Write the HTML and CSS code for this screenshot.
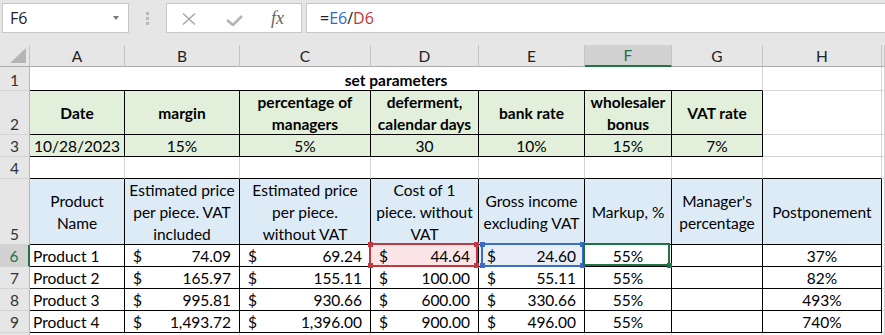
FILE: index.html
```html
<!DOCTYPE html>
<html lang="en">
<head>
    <meta charset="UTF-8">
    <meta name="viewport" content="width=device-width, initial-scale=1.0">
    <title>Parameters sheet</title>
    <link rel="stylesheet" href="styles.css">
</head>

<body>
    <div class="toolbar">
        <div class="name-box"><span>F6</span><span class="caret"></span></div>
        <div class="grip"><i></i><i></i><i></i></div>
        <div class="fx-buttons">
            <svg class="icon-x" width="14" height="12" viewBox="0 0 14 12">
                <path d="M1 0.5 L13 11.5 M13 0.5 L1 11.5" stroke="#ababab" stroke-width="1.6" fill="none"/>
            </svg>
            <svg class="icon-ok" width="17" height="11" viewBox="0 0 17 11">
                <path d="M1 5 L7 10 L16 1" stroke="#b4b4b4" stroke-width="2.6" fill="none"/>
            </svg>
            <span class="fx">fx</span>
        </div>
        <div class="formula">=<span class="ref-e">E6</span>/<span class="ref-d">D6</span></div>
    </div>

    <div class="sheet">
        <!-- column headers -->
        <div class="hd corner"><svg width="16" height="15" viewBox="0 0 16 15"><polygon points="16,0 16,15 0,15" fill="#b5b5b5"/></svg></div>
        <div class="hd">A</div>
        <div class="hd">B</div>
        <div class="hd">C</div>
        <div class="hd">D</div>
        <div class="hd">E</div>
        <div class="hd sel">F</div>
        <div class="hd">G</div>
        <div class="hd">H</div>
        <div class="hd"></div>

        <!-- row 1 -->
        <div class="rh">1</div>
        <div class="c span7 bb bold ctr"><span>set parameters</span></div>
        <div class="c"></div>
        <div class="c"></div>

        <!-- row 2 -->
        <div class="rh">2</div>
        <div class="c b green bold wrap"><span>Date</span></div>
        <div class="c b green bold wrap"><span>margin</span></div>
        <div class="c b green bold wrap"><span>percentage of<br>managers</span></div>
        <div class="c b green bold wrap"><span>deferment,<br>calendar days</span></div>
        <div class="c b green bold wrap"><span>bank rate</span></div>
        <div class="c b green bold wrap"><span>wholesaler<br>bonus</span></div>
        <div class="c b green bold wrap"><span>VAT rate</span></div>
        <div class="c"></div>
        <div class="c"></div>

        <!-- row 3 -->
        <div class="rh">3</div>
        <div class="c b green ctr"><span>10/28/2023</span></div>
        <div class="c b green ctr"><span>15%</span></div>
        <div class="c b green ctr"><span>5%</span></div>
        <div class="c b green ctr"><span>30</span></div>
        <div class="c b green ctr"><span>10%</span></div>
        <div class="c b green ctr"><span>15%</span></div>
        <div class="c b green ctr"><span>7%</span></div>
        <div class="c"></div>
        <div class="c"></div>

        <!-- row 4 -->
        <div class="rh">4</div>
        <div class="c bb"></div>
        <div class="c bb"></div>
        <div class="c bb"></div>
        <div class="c bb"></div>
        <div class="c bb"></div>
        <div class="c bb"></div>
        <div class="c bb"></div>
        <div class="c bb"></div>
        <div class="c"></div>

        <!-- row 5 -->
        <div class="rh">5</div>
        <div class="c b blue wrap"><span>Product<br>Name</span></div>
        <div class="c b blue wrap"><span>Estimated price<br>per piece. VAT<br>included</span></div>
        <div class="c b blue wrap"><span>Estimated price<br>per piece.<br>without VAT</span></div>
        <div class="c b blue wrap"><span>Cost of 1<br>piece. without<br>VAT</span></div>
        <div class="c b blue wrap"><span>Gross income<br>excluding VAT</span></div>
        <div class="c b blue wrap"><span>Markup, %</span></div>
        <div class="c b blue wrap"><span>Manager's<br>percentage</span></div>
        <div class="c b blue wrap"><span>Postponement</span></div>
        <div class="c"></div>

        <!-- row 6 -->
        <div class="rh sel">6</div>
        <div class="c b txt"><span>Product 1</span></div>
        <div class="c b acct"><span>$</span><span>74.09</span></div>
        <div class="c b acct"><span>$</span><span>69.24</span></div>
        <div class="c b acct ref red"><span>$</span><span>44.64</span><i class="frame"><b class="tl"></b><b class="tr"></b><b class="bl"></b><b class="br"></b></i></div>
        <div class="c b acct ref blu"><span>$</span><span>24.60</span><i class="frame"><b class="tl"></b><b class="tr"></b><b class="bl"></b><b class="br"></b></i></div>
        <div class="c b ctr ref active"><span>55%</span><i class="frame"><b class="br"></b></i></div>
        <div class="c b"></div>
        <div class="c b ctr"><span>37%</span></div>
        <div class="c"></div>

        <!-- row 7 -->
        <div class="rh">7</div>
        <div class="c b txt"><span>Product 2</span></div>
        <div class="c b acct"><span>$</span><span>165.97</span></div>
        <div class="c b acct"><span>$</span><span>155.11</span></div>
        <div class="c b acct"><span>$</span><span>100.00</span></div>
        <div class="c b acct"><span>$</span><span>55.11</span></div>
        <div class="c b ctr"><span>55%</span></div>
        <div class="c b"></div>
        <div class="c b ctr"><span>82%</span></div>
        <div class="c"></div>

        <!-- row 8 -->
        <div class="rh">8</div>
        <div class="c b txt"><span>Product 3</span></div>
        <div class="c b acct"><span>$</span><span>995.81</span></div>
        <div class="c b acct"><span>$</span><span>930.66</span></div>
        <div class="c b acct"><span>$</span><span>600.00</span></div>
        <div class="c b acct"><span>$</span><span>330.66</span></div>
        <div class="c b ctr"><span>55%</span></div>
        <div class="c b"></div>
        <div class="c b ctr"><span>493%</span></div>
        <div class="c"></div>

        <!-- row 9 -->
        <div class="rh">9</div>
        <div class="c b txt"><span>Product 4</span></div>
        <div class="c b acct"><span>$</span><span>1,493.72</span></div>
        <div class="c b acct"><span>$</span><span>1,396.00</span></div>
        <div class="c b acct"><span>$</span><span>900.00</span></div>
        <div class="c b acct"><span>$</span><span>496.00</span></div>
        <div class="c b ctr"><span>55%</span></div>
        <div class="c b"></div>
        <div class="c b ctr"><span>740%</span></div>
        <div class="c"></div>

        <!-- row 10, only its top edge is on screen -->
        <div class="rh edge"></div>
        <div class="c edge"></div>
        <div class="c edge"></div>
        <div class="c edge"></div>
        <div class="c edge"></div>
        <div class="c edge"></div>
        <div class="c edge"></div>
        <div class="c edge"></div>
        <div class="c edge"></div>
        <div class="c edge"></div>
    </div>
</body>
</html>
```

FILE: styles.css
```css
body {
    margin: 0;
    height: 335px;
    background-color: #fff;
    font-family: Lato, "Liberation Sans", sans-serif;
    color: #000;
    overflow: hidden;
}

/* formula bar */
.toolbar {
    height: 45px;
    box-sizing: border-box;
    padding-top: 3px;
    background-color: #e6e6e6;
    display: flex;
    align-items: flex-start;
    font-family: "Open Sans", "Noto Sans", sans-serif;
    font-size: 16px;
    color: #222;
}

.name-box {
    margin-left: 2px;
    width: 127px;
    height: 30px;
    box-sizing: border-box;
    padding: 0 9px 0 7px;
    background-color: #fff;
    border: 1px solid #c6c6c6;
    display: flex;
    align-items: center;
    justify-content: space-between;
}

.caret {
    width: 0;
    height: 0;
    border-left: 3.5px solid transparent;
    border-right: 3.5px solid transparent;
    border-top: 4px solid #7a7a7a;
}

.grip {
    width: 37px;
    padding-top: 9px;
    display: flex;
    flex-direction: column;
    align-items: center;
    gap: 2px;
}

.grip i {
    width: 3px;
    height: 3px;
    background-color: #b9b9b9;
}

.fx-buttons {
    width: 136px;
    height: 30px;
    box-sizing: border-box;
    padding-left: 15px;
    background-color: #fff;
    border: 1px solid #c6c6c6;
    display: flex;
    align-items: center;
}

.icon-x {
    margin-top: 2px;
}

.icon-ok {
    margin-left: 30px;
    margin-top: 5px;
}

.fx {
    margin-left: 28px;
    font-family: "Liberation Serif", serif;
    font-style: italic;
    font-size: 18px;
    color: #666;
}

.formula {
    flex: 1;
    margin-left: 4px;
    height: 30px;
    box-sizing: border-box;
    padding-left: 13px;
    background-color: #fff;
    border: 1px solid #c6c6c6;
    border-right: none;
    display: flex;
    align-items: center;
}

.ref-e {
    color: #2f6ac4;
}

.ref-d {
    color: #c0343a;
}

/* grid */
.sheet {
    display: grid;
    grid-template-columns: 30px 95px 115px 131px 108px 106px 87px 91px 119px 1fr;
    grid-template-rows: 22px 24px 44px 22px 22px 66px 22px 22px 22px 22px 2px;
    font-size: 15.5px;
    line-height: 20px;
}

.sheet > div {
    box-sizing: border-box;
    display: flex;
    white-space: nowrap;
}

.hd {
    background-color: #e6e6e6;
    border-right: 1px solid #c4c4c4;
    border-bottom: 1px solid #ababab;
    align-items: center;
    justify-content: center;
    color: #222;
}

.hd.sel {
    background-color: #d2d2d2;
    border-bottom: 2px solid #217346;
    color: #217346;
}

.corner {
    align-items: flex-end !important;
    justify-content: flex-end !important;
    padding: 0 3px 3px 0;
}

.corner svg {
    display: block;
}

.rh {
    background-color: #e6e6e6;
    border-right: 1px solid #b5b5b5;
    border-bottom: 1px solid #d4d4d4;
    align-items: flex-end;
    justify-content: center;
    color: #333;
}

.rh.sel {
    background-color: #d2d2d2;
    border-right: 2px solid #217346;
    color: #217346;
}

.c {
    background-color: #fff;
    border-right: 1px solid #d4d4d4;
    border-bottom: 1px solid #d4d4d4;
    align-items: flex-end;
}

.edge {
    border-bottom: none !important;
}

.span7 {
    grid-column: span 7;
}

.b {
    border-right-color: #000;
    border-bottom-color: #000;
}

.bb {
    border-bottom-color: #000;
}

.bold {
    font-weight: bold;
}

.green {
    background-color: #e2efda;
}

.blue {
    background-color: #ddebf7;
}

.ctr {
    justify-content: center;
}

.txt {
    padding-left: 3px;
}

.wrap {
    align-items: center;
    justify-content: center;
    text-align: center;
    line-height: 22px;
}

.acct {
    justify-content: space-between;
    padding: 0 8px 0 8px;
}

/* formula reference boxes and active cell */
.ref {
    position: relative;
}

.frame {
    position: absolute;
    z-index: 2;
    top: -2px;
    bottom: -1px;
    border: 2px solid;
}

.frame b {
    position: absolute;
    width: 5px;
    height: 5px;
    background-color: currentColor;
}

.frame .tl { left: -3px; top: -3px; }
.frame .tr { right: -3px; top: -3px; }
.frame .bl { left: -3px; bottom: -3px; }
.frame .br { right: -3px; bottom: -3px; }

.red {
    background-color: #fbe5e6;
}

.red .frame {
    left: -2px;
    right: 0;
    color: #c2383f;
}

.blu {
    background-color: #e8eef8;
}

.blu .frame {
    left: 2px;
    right: 0;
    color: #3a6ec6;
}

.active .frame {
    left: -2px;
    right: 1px;
    bottom: 0;
    color: #217346;
}

.active .frame .br {
    right: -4px;
    bottom: -4px;
}
```
